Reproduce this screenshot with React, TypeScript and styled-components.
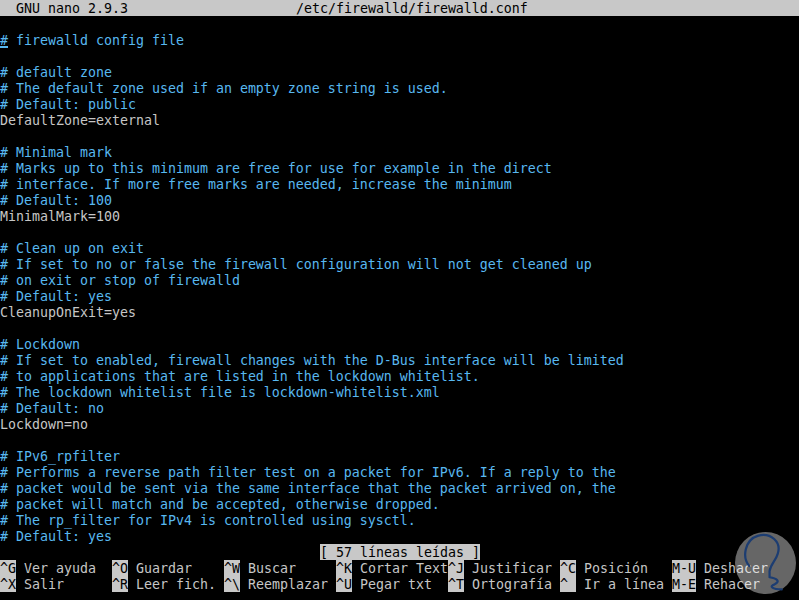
import React from "react";
import styled, { createGlobalStyle } from "styled-components";

const GlobalStyle = createGlobalStyle`
  html, body { margin: 0; padding: 0; background: #000; }
  body { width: 799px; height: 600px; overflow: hidden; }
`;

const CELL = 8;
const ROW = 16;

const Screen = styled.div`
  position: relative;
  width: 799px;
  height: 600px;
  background: #000;
  overflow: hidden;
  font-family: "DejaVu Sans Mono", "Liberation Mono", monospace;
  font-size: 13.29px;
  line-height: ${ROW - 1}px;
  color: #c6c6c6;
  white-space: pre;
  display: flex;
  flex-direction: column;
`;

const TitleBar = styled.div`
  box-sizing: border-box;
  height: ${ROW}px;
  padding-top: 1px;
  background: #c8c8c8;
  color: #000;
  display: flex;
`;

const TitleSlot = styled.span<{ $col: number }>`
  margin-left: ${(p) => p.$col * CELL}px;
`;

const Editor = styled.div`
  display: flex;
  flex-direction: column;
  padding-top: ${ROW}px;
`;

const Line = styled.div<{ $tone: "comment" | "plain" }>`
  box-sizing: border-box;
  height: ${ROW}px;
  padding-top: 1px;
  color: ${(p) => (p.$tone === "comment" ? "#58b8f0" : "#c6c6c6")};
`;

const Cursor = styled.span`
  display: inline-block;
  width: ${CELL}px;
  height: ${ROW - 1}px;
  vertical-align: top;
  box-shadow: inset 0 -3px 0 -1px #58b8f0;
`;

const StatusRow = styled.div`
  height: ${ROW}px;
  padding-left: ${40 * CELL}px;
  display: flex;
`;

const StatusMsg = styled.span`
  box-sizing: border-box;
  height: ${ROW}px;
  padding-top: 1px;
  background: #c8c8c8;
  color: #000;
`;

const ShortcutGrid = styled.div`
  display: grid;
  grid-template-columns: repeat(6, ${14 * CELL}px) 1fr;
  grid-auto-rows: ${ROW}px;
`;

const Shortcut = styled.div`
  display: flex;
  align-items: stretch;
`;

const Key = styled.span`
  box-sizing: border-box;
  padding-top: 1px;
  background: #c8c8c8;
  color: #000;
`;

const Label = styled.span`
  box-sizing: border-box;
  padding-top: 1px;
  color: #c6c6c6;
  padding-left: ${CELL}px;
`;

const Watermark = styled.div`
  position: absolute;
  left: 735px;
  top: 532px;
  width: 61px;
  height: 62px;
  border-radius: 50%;
  background: rgba(255, 255, 255, 0.4);
  pointer-events: none;
`;

type L = { t: string; c?: boolean };

const lines: L[] = [
  { t: "" },
  { t: "# default zone", c: true },
  { t: "# The default zone used if an empty zone string is used.", c: true },
  { t: "# Default: public", c: true },
  { t: "DefaultZone=external" },
  { t: "" },
  { t: "# Minimal mark", c: true },
  { t: "# Marks up to this minimum are free for use for example in the direct", c: true },
  { t: "# interface. If more free marks are needed, increase the minimum", c: true },
  { t: "# Default: 100", c: true },
  { t: "MinimalMark=100" },
  { t: "" },
  { t: "# Clean up on exit", c: true },
  { t: "# If set to no or false the firewall configuration will not get cleaned up", c: true },
  { t: "# on exit or stop of firewalld", c: true },
  { t: "# Default: yes", c: true },
  { t: "CleanupOnExit=yes" },
  { t: "" },
  { t: "# Lockdown", c: true },
  { t: "# If set to enabled, firewall changes with the D-Bus interface will be limited", c: true },
  { t: "# to applications that are listed in the lockdown whitelist.", c: true },
  { t: "# The lockdown whitelist file is lockdown-whitelist.xml", c: true },
  { t: "# Default: no", c: true },
  { t: "Lockdown=no" },
  { t: "" },
  { t: "# IPv6_rpfilter", c: true },
  { t: "# Performs a reverse path filter test on a packet for IPv6. If a reply to the", c: true },
  { t: "# packet would be sent via the same interface that the packet arrived on, the", c: true },
  { t: "# packet will match and be accepted, otherwise dropped.", c: true },
  { t: "# The rp_filter for IPv4 is controlled using sysctl.", c: true },
  { t: "# Default: yes", c: true },
];

const shortcuts: [string, string][] = [
  ["^G", "Ver ayuda"],
  ["^O", "Guardar"],
  ["^W", "Buscar"],
  ["^K", "Cortar Text"],
  ["^J", "Justificar"],
  ["^C", "Posición"],
  ["M-U", "Deshacer"],
  ["^X", "Salir"],
  ["^R", "Leer fich."],
  ["^\\", "Reemplazar"],
  ["^U", "Pegar txt"],
  ["^T", "Ortografía"],
  ["^_", "Ir a línea"],
  ["M-E", "Rehacer"],
];

export default function App() {
  return (
    <>
      <GlobalStyle />
      <Screen>
        <TitleBar>
          <TitleSlot $col={2}>GNU nano 2.9.3</TitleSlot>
          <TitleSlot $col={21}>/etc/firewalld/firewalld.conf</TitleSlot>
        </TitleBar>
        <Editor>
          <Line $tone="comment">
            <Cursor>#</Cursor> firewalld config file
          </Line>
          {lines.map((l, i) => (
            <Line key={i} $tone={l.c ? "comment" : "plain"}>
              {l.t}
            </Line>
          ))}
        </Editor>
        <StatusRow>
          <StatusMsg>[ 57 líneas leídas ]</StatusMsg>
        </StatusRow>
        <ShortcutGrid>
          {shortcuts.map(([k, l]) => (
            <Shortcut key={k}>
              <Key>{k}</Key>
              <Label>{l}</Label>
            </Shortcut>
          ))}
        </ShortcutGrid>
        <Watermark>
          <svg width="61" height="62" viewBox="0 0 60 60">
            <path
              d="M14 33 C7 25 9 7 23 3 C35 0 46 9 42 21 C40 28 35 31 34 38 L34 44 C41 45 45 48 39 51 C33 53 37 56 46 56"
              fill="none"
              stroke="#1c3d72"
              strokeWidth="2.2"
              strokeLinecap="round"
              strokeLinejoin="round"
            />
          </svg>
        </Watermark>
      </Screen>
    </>
  );
}
